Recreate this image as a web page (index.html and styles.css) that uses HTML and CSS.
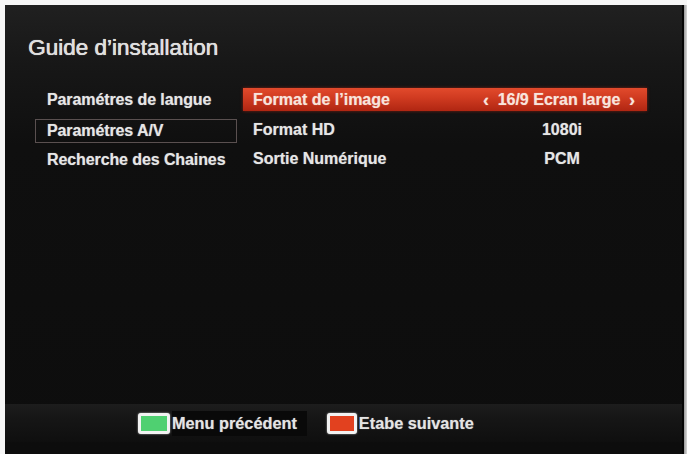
FILE: index.html
```html
<!DOCTYPE html>
<html lang="fr">
<head>
<meta charset="utf-8">
<title>Guide d'installation</title>
<link rel="stylesheet" href="styles.css">
</head>
<body>
<div class="frame">
  <div class="screen">
    <div class="main">
      <h1 class="title">Guide d’installation</h1>
      <div class="menu">
        <ul class="steps">
          <li class="step">Paramétres de langue</li>
          <li class="step step-current">Paramétres A/V</li>
          <li class="step">Recherche des Chaines</li>
        </ul>
        <div class="settings">
          <div class="setting setting-active">
            <span class="setting-label">Format de l’image</span>
            <span class="setting-value"><span class="arrow">‹</span><span class="value-text">16/9 Ecran large</span><span class="arrow">›</span></span>
          </div>
          <div class="setting">
            <span class="setting-label">Format HD</span>
            <span class="setting-value"><span class="value-text">1080i</span></span>
          </div>
          <div class="setting">
            <span class="setting-label">Sortie Numérique</span>
            <span class="setting-value"><span class="value-text">PCM</span></span>
          </div>
        </div>
      </div>
    </div>
    <div class="footer">
      <div class="hint hint-back"><span class="key key-green"></span><span class="hint-text">Menu précédent</span></div>
      <div class="hint"><span class="key key-red"></span><span class="hint-text">Etabe suivante</span></div>
    </div>
    <div class="bottom"></div>
  </div>
  <div class="edge"></div>
</div>
</body>
</html>
```

FILE: styles.css
```css
html, body {
  margin: 0;
  padding: 0;
  background: #f6f6f6;
}
body {
  width: 687px;
  height: 454px;
  overflow: hidden;
  font-family: "Liberation Sans", Arial, sans-serif;
}
.frame {
  display: flex;
  height: 449px;
  padding: 5px 0 0 5px;
}
.screen {
  width: 677px;
  display: flex;
  flex-direction: column;
  background: linear-gradient(to bottom, #202020 0px, #171717 60px, #0f0f0f 140px, #0d0d0d 100%);
  border-right: 2px solid #050505;
}
.edge {
  width: 3px;
  background: linear-gradient(to right, #9a9a9a, #d8d8d8);
}
.main {
  flex: 1;
  display: flex;
  flex-direction: column;
}
.title {
  margin: 29px 0 0 23px;
  font-size: 22.5px;
  line-height: 27px;
  font-weight: normal;
  color: #dedede;
  text-shadow: 0 0 1px rgba(255,255,255,0.6), 0.4px 0 0 #dedede;
}
.menu {
  display: flex;
  margin: 27px 0 0 30px;
}
.steps {
  list-style: none;
  margin: 0;
  padding: 0;
  width: 202px;
  display: flex;
  flex-direction: column;
  gap: 5px;
}
.step {
  height: 24px;
  line-height: 24px;
  padding-left: 12px;
  box-sizing: border-box;
  font-size: 16px;
  font-weight: bold;
  color: #e6e6e6;
  text-shadow: 0 0 1px rgba(255,255,255,0.5);
  letter-spacing: -0.1px;
}
.step:first-child {
  margin-bottom: 2px;
}
.step-current {
  border: 1px solid #5a5050;
  line-height: 22px;
  padding-left: 11px;
}
.settings {
  margin-left: 6px;
  width: 404px;
  display: flex;
  flex-direction: column;
  gap: 5px;
}
.setting {
  height: 24px;
  display: flex;
  align-items: center;
  font-size: 16px;
  font-weight: bold;
  color: #e6e6e6;
  text-shadow: 0 0 1px rgba(255,255,255,0.5);
}
.setting:first-child {
  margin-bottom: 2px;
}
.setting-active {
  height: 23px;
  background: linear-gradient(to bottom, #e24a2c 0%, #cf3a20 45%, #b02612 100%);
  box-shadow: 0 0 3px rgba(200,40,20,0.6);
  color: #f8e4dc;
}
.setting-label {
  width: 220px;
  padding-left: 10px;
}
.setting-value {
  flex: 1;
  display: flex;
  justify-content: center;
  align-items: center;
  gap: 7px;
  padding-left: 4px;
}
.setting-active .setting-value {
  justify-content: space-between;
  padding: 0 12px 0 10px;
}
.arrow {
  font-size: 18px;
  line-height: 20px;
}
.footer {
  height: 38px;
  display: flex;
  align-items: center;
  gap: 20px;
  padding-left: 133px;
  background: linear-gradient(to bottom, #1d1d1d 0%, #161616 35%, #0f0f0f 100%);
}
.hint {
  display: flex;
  align-items: center;
  gap: 2px;
}
.hint-back .hint-text {
  background: #090909;
  padding: 3px 10px 3px 0;
}
.key {
  width: 26px;
  height: 15px;
  border: 3px solid #f2f2f2;
  border-radius: 3px;
  box-shadow: 0 0 2px rgba(255,255,255,0.7);
}
.key-red {
  width: 24px;
}
.key-green {
  background: #4fd071;
}
.key-red {
  background: #e2411f;
}
.hint-text {
  font-size: 16.3px;
  font-weight: bold;
  color: #e4e4e4;
  text-shadow: 0 0 1px rgba(255,255,255,0.5);
}
.bottom {
  height: 12px;
}
```
